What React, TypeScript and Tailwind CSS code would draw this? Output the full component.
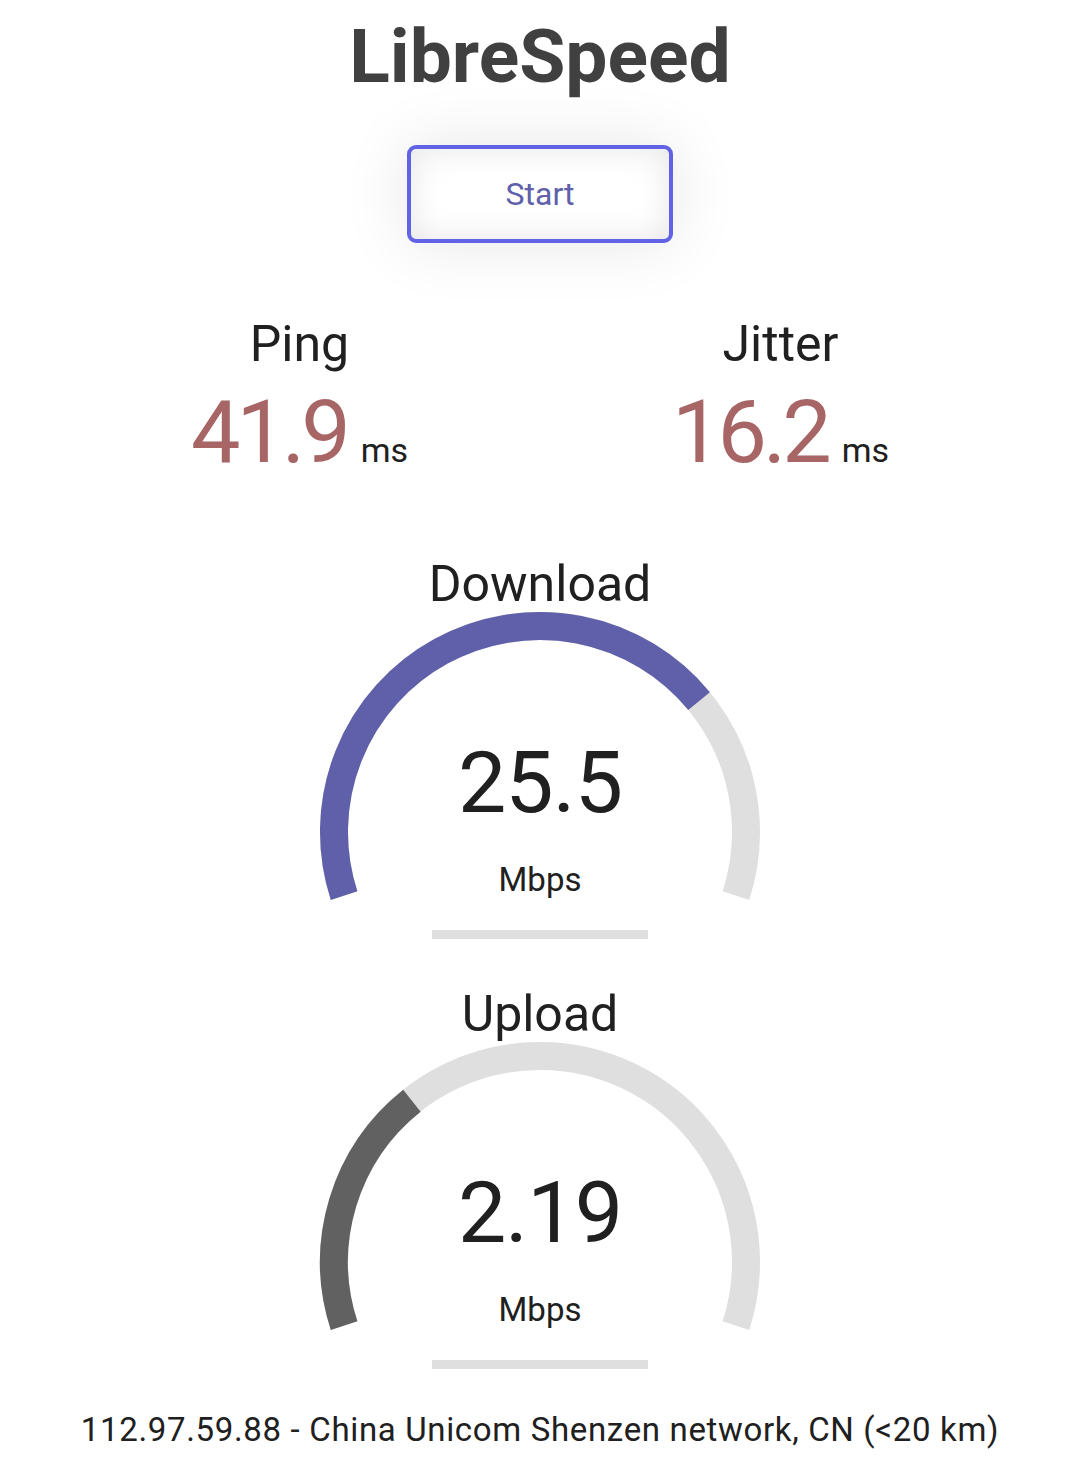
import React from "react";

const CX = 270;
const CY = 289;
const R = 206;
const SW = 28;

function pt(a: number) {
  return `${(CX + R * Math.cos(a)).toFixed(2)} ${(CY + R * Math.sin(a)).toFixed(2)}`;
}

function arc(amount: number) {
  const a0 = -Math.PI * 1.1;
  const a1 = a0 + amount * Math.PI * 1.2;
  const large = a1 - a0 > Math.PI ? 1 : 0;
  return `M ${pt(a0)} A ${R} ${R} 0 ${large} 1 ${pt(a1)}`;
}

function Gauge({
  label,
  value,
  amount,
  color,
}: {
  label: string;
  value: string;
  amount: number;
  color: string;
}) {
  return (
    <div className="relative w-[540px] h-[424px]">
      <svg
        className="absolute inset-0"
        width={540}
        height={424}
        viewBox="0 0 540 424"
      >
        <path d={arc(1)} fill="none" stroke="#dfdfdf" strokeWidth={SW} />
        <path d={arc(amount)} fill="none" stroke={color} strokeWidth={SW} />
        <rect x={162} y={387} width={216} height={9} fill="#dfdfdf" />
      </svg>
      <div className="relative flex flex-col items-center text-[#202020]">
        <div className="mt-[11px] h-[60px] leading-[60px] text-[50px]">{label}</div>
        <div className="mt-[126px] h-[86px] leading-[86px] text-[86px] tracking-[-0.01em]">{value}</div>
        <div className="mt-[37px] h-[33px] leading-[33px] text-[33px]">Mbps</div>
      </div>
    </div>
  );
}

function Stat({ label, value }: { label: string; value: string }) {
  return (
    <div className="w-[481px] flex flex-col items-center">
      <div className="h-[60px] leading-[60px] text-[50px] text-[#202020]">{label}</div>
      <div className="mt-[13px] h-[90px] flex items-baseline leading-[90px]">
        <span className="text-[88px] tracking-[-0.045em] text-[#a86565]">{value}</span>
        <span className="ml-[14px] text-[34px] leading-none text-[#202020]">ms</span>
      </div>
    </div>
  );
}

export default function App() {
  return (
    <div className="w-[1080px] min-h-[1462px] bg-white flex flex-col items-center font-['Roboto',sans-serif]">
      <h1 className="mt-[19px] h-[75px] leading-[75px] text-[75px] font-bold text-[#404040]">
        LibreSpeed
      </h1>
      <div className="mt-[51px] w-[266px] h-[98px] border-4 border-[#6262e6] rounded-[9px] flex items-center justify-center text-[32px] text-[#6060aa] shadow-[0_0_66px_rgba(0,0,0,0.1),inset_0_0_33px_rgba(0,0,0,0.1)]">
        Start
      </div>
      <div className="mt-[71px] flex justify-center">
        <Stat label="Ping" value="41.9" />
        <Stat label="Jitter" value="16.2" />
      </div>
      <div className="mt-[66px] flex flex-col items-center gap-[6px]">
        <Gauge label="Download" value="25.5" amount={0.734} color="#6060aa" />
        <Gauge label="Upload" value="2.19" amount={0.322} color="#616161" />
      </div>
      <div className="mt-[16px] h-[33px] leading-[33px] text-[33px] tracking-[0.02em] text-[#202020]">
        112.97.59.88 - China Unicom Shenzen network, CN (&lt;20 km)
      </div>
    </div>
  );
}
